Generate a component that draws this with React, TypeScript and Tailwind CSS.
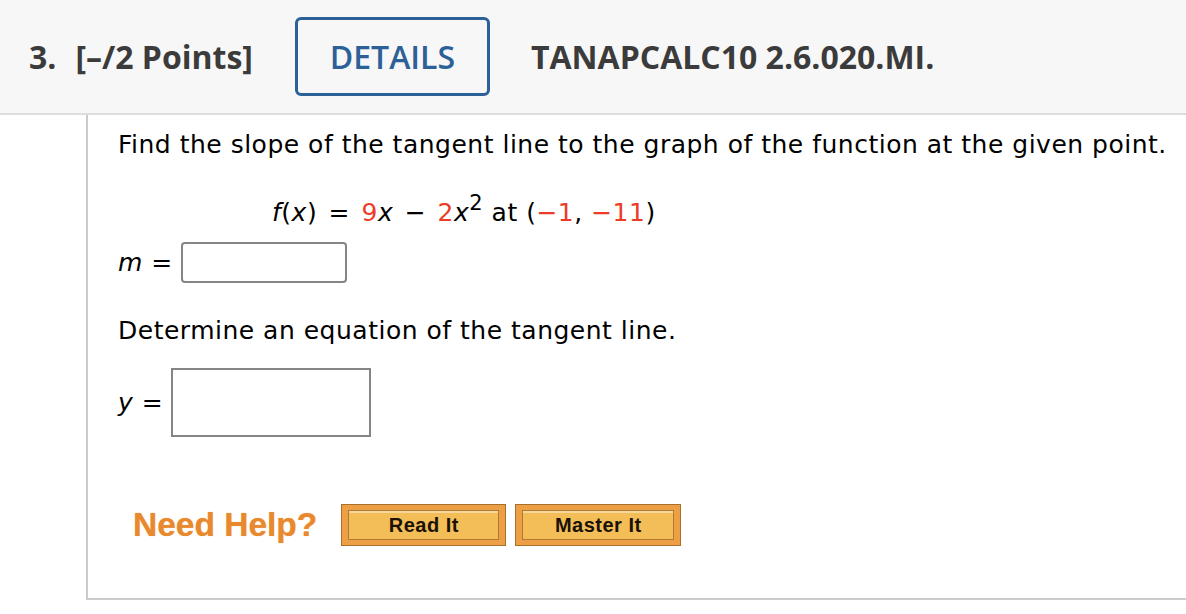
import React from "react";

const RED = "text-[#ec3b26]";

function HelpButton({ label, className }: { label: string; className?: string }) {
  return (
    <button
      className={`h-[42px] border border-[#a9702c] bg-[#ec9f44] px-[6px] py-[5px] ${className ?? ""}`}
    >
      <span
        className="flex h-full w-full items-center justify-center border border-[#b07a33] bg-[#f3bd58] text-[20px] font-bold text-[#1a1208] shadow-[inset_0_2px_0_#f8d79a]"
        style={{ fontFamily: "'Liberation Sans', Arial, sans-serif" }}
      >
        {label}
      </span>
    </button>
  );
}

export default function App() {
  return (
    <div className="h-[614px] w-[1186px] overflow-hidden bg-white">
      {/* Question header */}
      <div
        className="flex h-[115px] items-center border-b-2 border-[#dedede] bg-[#f7f7f7] pl-[29px] text-[32px] font-bold text-[#3b3b3b]"
        style={{ fontFamily: "'Open Sans', sans-serif" }}
      >
        <span>3.</span>
        <span className="ml-[19px]">[–/2 Points]</span>
        <div className="ml-[42px] flex h-[79px] w-[195px] items-center justify-center rounded-[6px] border-[3px] border-[#2c6197] font-semibold text-[#2c6197]">
          DETAILS
        </div>
        <span className="ml-[41px]">TANAPCALC10 2.6.020.MI.</span>
      </div>

      {/* Question body */}
      <div
        className="ml-[86px] h-[485px] border-b-2 border-l-2 border-[#cccccc] pl-[30px] pt-[15px] text-[25px] tracking-[0.5px] text-black"
        style={{ fontFamily: "'DejaVu Sans', Verdana, sans-serif" }}
      >
        <p className="leading-[30px]">Find the slope of the tangent line to the graph of the function at the given point.</p>

        <p className="mt-[38px] pl-[154px] leading-[30px] whitespace-pre">
          <i>f</i>(<i>x</i>)<span className="mx-[3px]"> = </span><span className={RED}>9</span><i>x</i>
          <span className="mx-[3px]"> − </span><span className={RED}>2</span><i>x</i>
          <sup className="relative -top-[11px] text-[21px]">2</sup> at (<span className={RED}>−1</span>,{" "}
          <span className={RED}>−11</span>)
        </p>

        <div className="mt-[14px] flex items-center">
          <span><i>m</i> =</span>
          <div className="ml-[8px] h-[41px] w-[166px] rounded-[4px] border-2 border-[#858585]" />
        </div>

        <p className="mt-[33px] leading-[30px]">Determine an equation of the tangent line.</p>

        <div className="mt-[22px] flex items-center">
          <span><i>y</i> =</span>
          <div className="ml-[8px] h-[69px] w-[200px] border-2 border-[#858585]" />
        </div>

        <div className="mt-[63px] flex items-center">
          <span
            className="ml-[15px] text-[33.5px] font-bold tracking-normal text-[#e8892f] [text-shadow:0_0_1px_#f3b06b]"
            style={{ fontFamily: "'Liberation Sans', Arial, sans-serif" }}
          >
            Need Help?
          </span>
          <HelpButton label="Read It" className="ml-[24px] w-[165px]" />
          <HelpButton label="Master It" className="ml-[9px] w-[166px]" />
        </div>
      </div>
    </div>
  );
}
